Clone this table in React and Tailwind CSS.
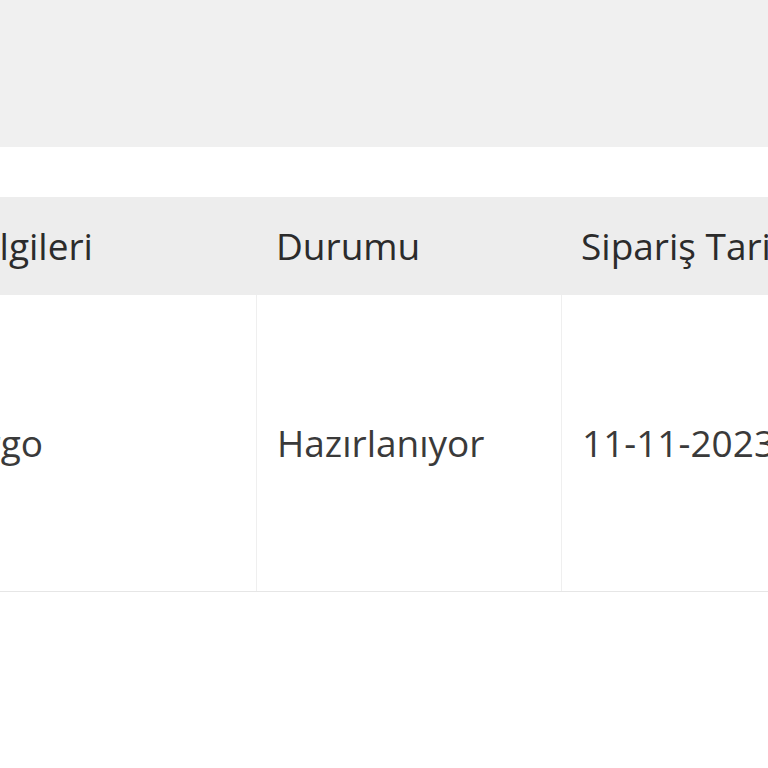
import React from "react";

const columns = [
  { key: "cargo", label: "Kargo Bilgileri", width: "w-[420px]" },
  { key: "status", label: "Durumu", width: "w-[305px]" },
  { key: "date", label: "Sipariş Tarihi", width: "w-[305px]" },
];

const order = {
  cargo: "Aras Kargo",
  status: "Hazırlanıyor",
  date: "11-11-2023",
};

const App = () => {
  return (
    <div
      className="w-[768px] h-[768px] overflow-hidden bg-white text-[#333333]"
      style={{ fontFamily: '"Open Sans", "Noto Sans", sans-serif' }}
    >
      <div className="h-[147px] bg-[#f0f0f0]" />
      <div className="pt-[50px] -ml-[164px]">
        <div className="flex h-[98px] bg-[#ededed] text-[37px] text-[#2b2b2b]">
          {columns.map((col) => (
            <div
              key={col.key}
              className={`${col.width} shrink-0 flex items-center px-[20px] whitespace-nowrap`}
            >
              {col.label}
            </div>
          ))}
        </div>
        <div className="flex h-[297px] border-b border-[#e6e6e6] text-[37px] text-[#3a3a3a]">
          {columns.map((col, i) => (
            <div
              key={col.key}
              className={`${col.width} shrink-0 flex items-center px-[20px] whitespace-nowrap ${
                i > 0 ? "border-l border-[#efefef]" : ""
              }`}
            >
              {order[col.key]}
            </div>
          ))}
        </div>
      </div>
    </div>
  );
};

export default App;
